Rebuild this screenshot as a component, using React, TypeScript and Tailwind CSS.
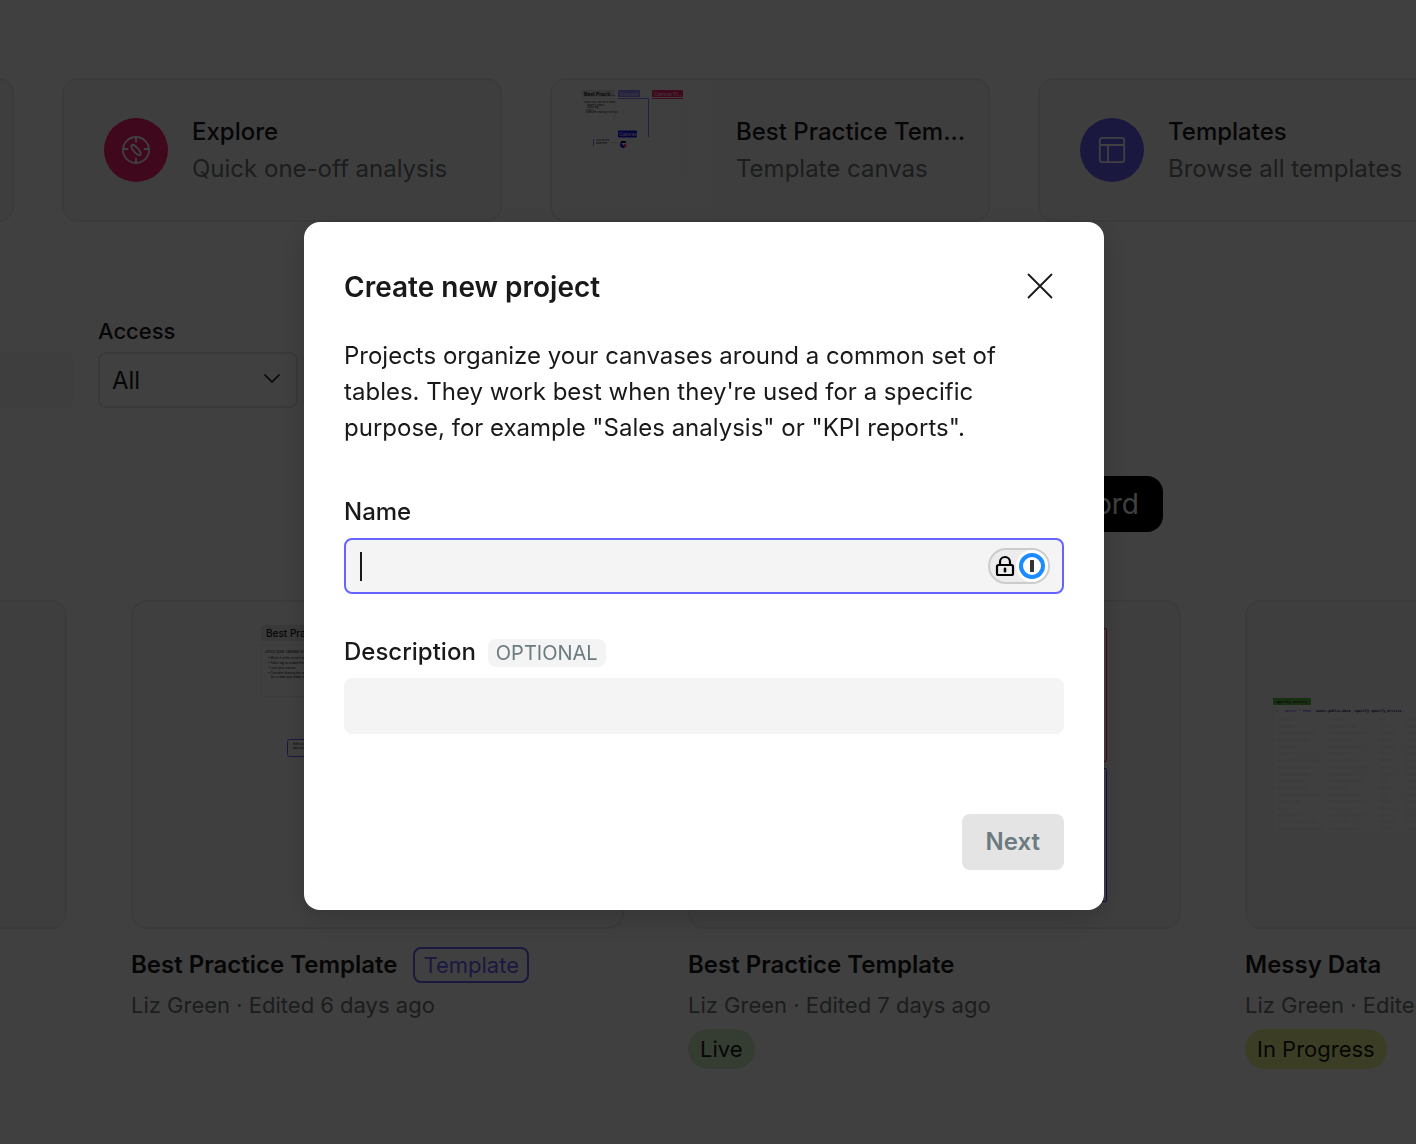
import { useState, type ReactNode } from 'react';
import { clsx } from 'clsx';

const CompassIcon = () => (
  <svg viewBox="0 0 28 28" className="w-7 h-7" fill="none" stroke="white" strokeWidth="1.8" strokeLinecap="round">
    <circle cx="14" cy="14" r="13" />
    <path d="M14 1.5v4M14 22.5v4M1.5 13h4M22.5 13h4" />
    <ellipse cx="14" cy="14" rx="2.4" ry="6.6" transform="rotate(-42 14 14)" />
  </svg>
);

const LayoutIcon = () => (
  <svg viewBox="0 0 28 28" className="w-7 h-7" fill="none" stroke="white" strokeWidth="1.8">
    <rect x="1.8" y="1.8" width="24.4" height="24.4" rx="2.6" />
    <path d="M1.8 9h24.4M10 9v17.2" />
  </svg>
);

const CloseIcon = () => (
  <svg viewBox="0 0 24 24" className="w-6 h-6 overflow-visible" fill="none" stroke="#191919" strokeWidth="1.8" strokeLinecap="round">
    <path d="M.5.5l23 23M23.5.5l-23 23" />
  </svg>
);

// Password manager badge inside the name field
const VaultBadge = () => (
  <svg viewBox="0 0 62 36" className="w-[62px] h-9" fill="none">
    <rect x="1" y="1" width="60" height="34" rx="17" fill="#ececec" stroke="#cccccc" strokeWidth="2" />
    <rect x="9" y="17" width="16" height="10" rx="1.5" stroke="black" strokeWidth="2.2" />
    <path d="M12 17v-3a5 5 0 0 1 10 0v3" stroke="black" strokeWidth="2.2" />
    <path d="M17 20.800v2.400" stroke="black" strokeWidth="2.6" strokeLinecap="round" />
    <circle cx="44" cy="18" r="16" fill="white" />
    <circle cx="44" cy="18" r="11" stroke="#1a8cff" strokeWidth="4" />
    <rect x="42" y="12" width="4" height="12" rx=".5" fill="#333333" />
  </svg>
);

const TemplateThumb = () => (
  <svg viewBox="0 0 160 140" className="w-40 h-[140px] shrink-0 bg-[#fcfcfc] rounded-l-[14px]" fontFamily="Inter, sans-serif">
    <rect x="30" y="10" width="33" height="7" rx="1" fill="#dedede" />
    <text x="32" y="15.500" fontSize="5" fontWeight="700" fill="#191919">Best Practi...</text>
    <path d="M30 18.500h33M62.500 18v23" stroke="#e4e4e4" />
    <g fontSize="2.500" fill="#191919">
      <text x="32" y="22.500">Once your canvas is ready</text>
      <text x="35" y="25.500">Name it clearly</text>
      <text x="35" y="28">Add a tag</text>
      <text x="34" y="30.500">Lock it</text>
      <text x="34" y="33">Consider sharing it with all</text>
    </g>
    <rect x="66" y="10" width="22" height="7" rx="1" fill="#9384ff" />
    <text x="68" y="15.500" fontSize="5" fontWeight="600" fill="#dcd8ff">Dataset</text>
    <path d="M66 18.500h30.500v38.500" fill="none" stroke="#8c7dff" />
    <rect x="100" y="10" width="31" height="7" rx="1" fill="#fb2070" />
    <text x="102" y="15.500" fontSize="5" fontWeight="600" fill="#ffc4da">Canvas Pl...</text>
    <path d="M100 18.500h31" stroke="#fb2070" />
    <path d="M100.500 19v38M130.500 19v78" stroke="#f7f2f4" />
    <rect x="66" y="50.500" width="19" height="7" rx="1" fill="#1a10f0" />
    <text x="67" y="56" fontSize="5" fontWeight="600" fill="#d0ccff">Canvas</text>
    <path d="M41.500 59v7" stroke="#8c7dff" />
    <text x="44" y="61" fontSize="2.500" fill="#191919">Add source</text>
    <text x="44" y="64" fontSize="2.500" fill="#191919">data here</text>
    <path d="M59 62.500h7" stroke="#bbbbbb" strokeDasharray="1 1" />
    <path d="M69 61h5v2h-5z" fill="#0b0c50" />
    <path d="M68 62l4 4 1 2h-3l-2-2z" fill="#1a10f0" />
    <circle cx="73" cy="65.500" r="1.500" fill="#fb2070" />
  </svg>
);

const BestPracticePreview = () => (
  <svg viewBox="0 0 489 324" className="w-[489px] h-[324px]" fontFamily="Inter, sans-serif" fill="#191919">
    <rect x="128" y="23" width="110" height="16" rx="2" fill="#e4e4e4" />
    <text x="133" y="34.500" fontSize="10" fontWeight="500">Best Practice Template</text>
    <rect x="128.500" y="42.500" width="110" height="52" fill="none" stroke="#f0f0f0" />
    <text x="132" y="50.500" fontSize="4">Once your canvas is finished</text>
    <g fontSize="3">
      <text x="135" y="57">•  Move it to the correct project</text>
      <text x="135" y="62">•  Add a tag to update the status</text>
      <text x="135" y="67">•  Lock your canvas</text>
      <text x="135" y="72">•  Consider sharing the canvas</text>
      <text x="138" y="76">for a read-only ready report</text>
    </g>
    <rect x="154.500" y="137.500" width="60" height="17" rx="2" fill="none" stroke="#6b5fff" />
    <text x="160" y="143" fontSize="3">Add your source</text>
    <text x="160" y="147" fontSize="3">data and queries</text>
  </svg>
);

const FramesPreview = () => (
  <svg viewBox="0 0 489 324" className="w-[489px] h-[324px]" fill="none" strokeWidth="1">
    <rect x="297.500" y="26.500" width="119" height="133" rx="1.500" stroke="#fb2070" />
    <rect x="297.500" y="166.500" width="119" height="133" rx="1.500" stroke="#4438ff" />
  </svg>
);

const rowWidths = [18, 18, 40, 32, 18, 14, 43, 34, 34, 30, 31, 44, 24, 12, 26, 41, 47];

const TablePreview = () => (
  <svg viewBox="0 0 489 324" className="w-[489px] h-[324px]" fontFamily="Liberation Mono, monospace" fill="#191919">
    <rect x="26.500" y="95.500" width="300" height="135" fill="#fafafa" stroke="#f0f0f0" />
    <rect x="26" y="96" width="38" height="7" rx="1" fill="#5fc04a" />
    <text x="29" y="101" fontSize="3.500" fontWeight="700">spotify_artists</text>
    <g fontSize="3.400">
      <text x="29" y="110" fill="#8888aa">1</text>
      <text x="37.500" y="110" fill="#4438ff">SELECT * FROM</text>
      <text x="67" y="110" fill="#1a1060" fontWeight="700">`count-public-data`.spotify.spotify_artists</text>
    </g>
    {rowWidths.map((w, i) => (
      <g key={i} fill="#f2f2f2">
        <rect x="29" y={116 + i * 6.84} width={w} height="3" />
        <rect x="82" y={116 + i * 6.84} width={16 + ((i * 11) % 27)} height="3" />
        <rect x="132" y={116 + i * 6.84} width={8 + ((i * 5) % 11)} height="3" />
        <rect x="159" y={116 + i * 6.84} width="12" height="3" />
      </g>
    ))}
  </svg>
);

interface ShortcutProps {
  title: string;
  subtitle: string;
  icon?: ReactNode;
  iconClass?: string;
}

function Shortcut({ title, subtitle, icon, iconClass }: ShortcutProps) {
  return (
    <a
      href="#"
      className="flex items-center w-[440px] h-36 shrink-0 border-2 border-[#ebebeb] rounded-2xl bg-[#f8f8f8]"
    >
      {icon ? (
        <span className={clsx('ml-10 w-16 h-16 rounded-full shrink-0 flex items-center justify-center', iconClass)}>
          {icon}
        </span>
      ) : (
        <TemplateThumb />
      )}
      <span className="pl-6 pr-5 min-w-0 flex-1 text-2xl leading-9">
        <span className="block font-medium text-[#191919] truncate">{title}</span>
        <span className="block mt-px text-[#6f7475] whitespace-nowrap">{subtitle}</span>
      </span>
    </a>
  );
}

const projects = [
  {
    title: 'Sales Overview',
    meta: 'Liz Green · Edited 5 days ago',
    previewClass: 'bg-[#f8f8f8]',
  },
  {
    title: 'Best Practice Template',
    meta: 'Liz Green · Edited 6 days ago',
    template: true,
    preview: <BestPracticePreview />,
    previewClass: 'bg-[#fcfcfc]',
  },
  {
    title: 'Best Practice Template',
    meta: 'Liz Green · Edited 7 days ago',
    status: 'Live',
    statusClass: 'bg-[#d2f0c8]',
    preview: <FramesPreview />,
    previewClass: 'bg-[#f8f8f8]',
  },
  {
    title: 'Messy Data',
    meta: 'Liz Green · Edited 8 days ago',
    status: 'In Progress',
    statusClass: 'bg-[#ecf890]',
    preview: <TablePreview />,
    previewClass: 'bg-[#f8f8f8]',
  },
];

function ProjectCard({ title, meta, template, status, statusClass, preview, previewClass }: (typeof projects)[number]) {
  return (
    <article>
      <div className={clsx('h-[329px] border-2 border-[#ebebeb] rounded-2xl overflow-hidden', previewClass)}>
        {preview}
      </div>
      <div className="mt-[18px] h-9 flex items-center gap-4">
        <h3 className="text-2xl leading-9 font-semibold text-[#191919]">{title}</h3>
        {template && (
          <span className="h-9 px-2 flex items-center border-2 border-[#6b5fff] rounded-lg text-[22px] text-[#6b5fff]">
            Template
          </span>
        )}
      </div>
      <p className="mt-1.5 text-[22px] leading-8 text-[#6f7475]">{meta}</p>
      {status && (
        <span className={clsx('mt-2 h-10 px-3 inline-flex items-center rounded-full text-[22px] text-[#191919]', statusClass)}>
          {status}
        </span>
      )}
    </article>
  );
}

function Dashboard() {
  return (
    <main className="-ml-[426px] -mr-[322px] pt-[78px]">
      <nav className="flex gap-12" aria-label="Shortcuts">
        <Shortcut title="Canvas" subtitle="Start from blank" icon={<LayoutIcon />} iconClass="bg-[#6b5fff]" />
        <Shortcut title="Explore" subtitle="Quick one-off analysis" icon={<CompassIcon />} iconClass="bg-[#fb2070]" />
        <Shortcut title="Best Practice Template" subtitle="Template canvas" />
        <Shortcut title="Templates" subtitle="Browse all templates" icon={<LayoutIcon />} iconClass="bg-[#6b5fff]" />
      </nav>

      <div className="mt-[93px] flex items-end gap-6">
        <input
          type="search"
          aria-label="Search canvases"
          className="w-[500px] h-14 rounded-lg bg-[#f8f8f8]"
        />
        <div>
          <label htmlFor="access" className="block mb-[5px] text-[22px] leading-8 font-medium text-[#191919]">
            Access
          </label>
          <div className="relative">
            <select
              id="access"
              className="w-50 h-14 px-3 pt-0.5 appearance-none border-2 border-[#e4e4e4] rounded-lg bg-transparent text-2xl text-[#191919]"
            >
              <option>All</option>
              <option>Private</option>
            </select>
            <svg
              viewBox="0 0 16 10"
              className="absolute right-[18px] top-[22px] w-4 h-2.5 pointer-events-none"
              fill="none"
              stroke="#191919"
              strokeWidth="1.7"
              strokeLinecap="round"
              strokeLinejoin="round"
            >
              <path d="M1 1l7 7 7-7" />
            </svg>
          </div>
        </div>
      </div>

      <div className="mt-[68px] flex justify-end pr-[575px]">
        <button type="button" className="h-14 px-6 rounded-2xl bg-black text-[28px] text-white">
          Record
        </button>
      </div>

      <section className="mt-[68px] grid grid-cols-4 gap-16">
        {projects.map((project) => (
          <ProjectCard key={project.meta} {...project} />
        ))}
      </section>
    </main>
  );
}

function CreateProjectDialog() {
  const [name, setName] = useState('');

  return (
    <div className="fixed inset-0 z-50 pr-2 pb-3 flex items-center justify-center bg-black/75">
      <form
        role="dialog"
        aria-labelledby="dialog-title"
        className="w-full max-w-[800px] p-10 rounded-2xl bg-white text-2xl text-[#191919] shadow-[0_8px_32px_rgba(0,0,0,0.2)]"
      >
        <div className="h-12 pr-3 flex items-center justify-between">
          <h2 id="dialog-title" className="pt-0.5 text-[28px] leading-9 font-semibold">Create new project</h2>
          <button type="button" aria-label="Close">
            <CloseIcon />
          </button>
        </div>

        <p className="mt-7 leading-9">
          Projects organize your canvases around a common set of tables. They work best when they're used for a
          specific purpose, for example "Sales analysis" or "KPI reports".
        </p>

        <label htmlFor="name" className="block mt-12 leading-9 font-medium">Name</label>
        <div className="relative mt-2">
          <input
            id="name"
            type="text"
            value={name}
            onChange={(e) => setName(e.target.value)}
            className="w-full h-14 px-3.5 border-2 border-[#6663ff] rounded-lg bg-[#f4f4f4] outline-none caret-transparent"
          />
          {/* Caret */}
          {!name && <span className="absolute left-4 top-3.5 w-0.5 h-[29px] bg-[#191919] pointer-events-none" />}
          <span className="absolute right-3.5 top-2.5">
            <VaultBadge />
          </span>
        </div>

        <div className="mt-10 flex items-end gap-3">
          <label htmlFor="description" className="leading-9 font-medium">Description</label>
          <span className="mb-[3px] h-7 px-2 flex items-center rounded-lg bg-[#f4f4f4] text-xl text-[#6b7b80]">OPTIONAL</span>
        </div>
        <input id="description" type="text" className="w-full mt-2 h-14 px-4 rounded-lg bg-[#f4f4f4] outline-none" />

        <div className="mt-20 flex justify-end">
          <button type="submit" disabled={!name} className="h-14 px-6 rounded-lg bg-[#e4e4e4] font-semibold text-[#6b7b80]">
            Next
          </button>
        </div>
      </form>
    </div>
  );
}

export default function App() {
  return (
    <div className="min-h-screen overflow-hidden bg-white font-[Inter,sans-serif]">
      <Dashboard />
      <CreateProjectDialog />
    </div>
  );
}
